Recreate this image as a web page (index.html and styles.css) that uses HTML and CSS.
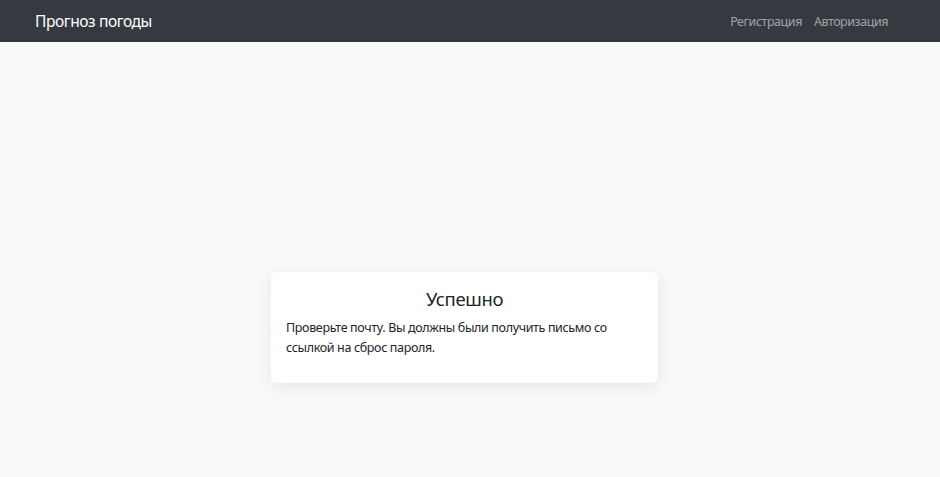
FILE: index.html
```html
<!DOCTYPE html>
<html lang="ru">
<head>
<meta charset="utf-8">
<title>Прогноз погоды</title>
<link rel="stylesheet" href="styles.css">
</head>
<body>
<nav class="navbar">
  <a class="brand" href="#">Прогноз погоды</a>
  <div class="nav-links">
    <a href="#">Регистрация</a>
    <a href="#">Авторизация</a>
  </div>
</nav>
<main class="main">
  <div class="card">
    <h2 class="card-title">Успешно</h2>
    <p class="card-text">Проверьте почту. Вы должны были получить письмо со ссылкой на сброс пароля.</p>
  </div>
</main>
</body>
</html>
```

FILE: styles.css
```css
html, body {
  margin: 0;
  padding: 0;
}
body {
  background: #f8f9fa;
  font-family: "Noto Sans", "Open Sans", sans-serif;
  color: #212529;
  height: 477px;
  overflow: hidden;
}
.navbar {
  height: 42px;
  background: #343a40;
  display: flex;
  align-items: center;
  justify-content: space-between;
  padding: 0 52px 0 35px;
  box-sizing: border-box;
}
.brand {
  color: #fff;
  text-decoration: none;
  font-size: 15.5px;
  letter-spacing: -0.4px;
}
.nav-links {
  display: flex;
  gap: 12px;
}
.nav-links a {
  color: rgba(255,255,255,0.55);
  text-decoration: none;
  font-size: 12.5px;
  letter-spacing: -0.45px;
}
.main {
  display: flex;
  justify-content: center;
  padding-top: 230px;
  padding-right: 11px;
}
.card {
  width: 387px;
  height: 111px;
  box-sizing: border-box;
  background: #fff;
  border-radius: 6px;
  box-shadow: 0 4px 16px rgba(0,0,0,0.08);
  padding: 14px 15px;
}
.card-title {
  margin: 0 0 6px;
  text-align: center;
  font-weight: 400;
  font-size: 18.5px;
  letter-spacing: -0.35px;
  line-height: 26px;
}
.card-text {
  margin: 0;
  font-size: 12.5px;
  letter-spacing: -0.35px;
  line-height: 19.5px;
}
```
